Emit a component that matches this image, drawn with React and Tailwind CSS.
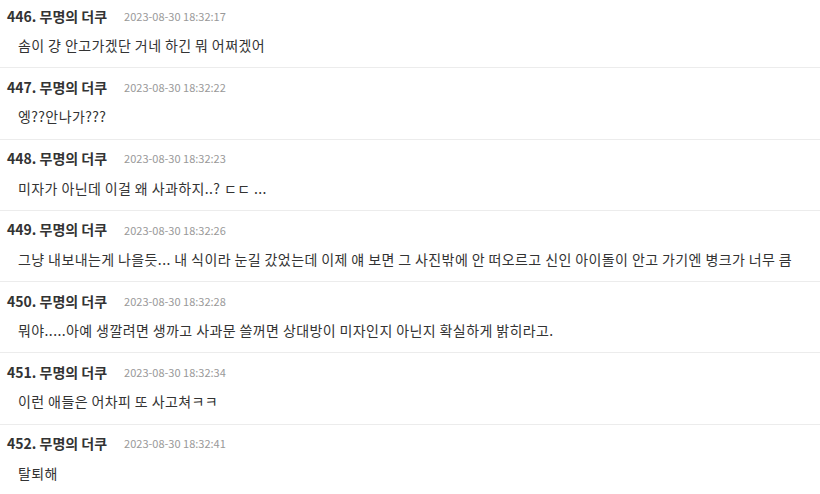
const comments = [
  { no: 446, date: '2023-08-30 18:32:17', text: '솜이 걍 안고가겠단 거네 하긴 뭐 어쩌겠어' },
  { no: 447, date: '2023-08-30 18:32:22', text: '엥??안나가???' },
  { no: 448, date: '2023-08-30 18:32:23', text: '미자가 아닌데 이걸 왜 사과하지..? ㄷㄷ ...' },
  { no: 449, date: '2023-08-30 18:32:26', text: '그냥 내보내는게 나을듯... 내 식이라 눈길 갔었는데 이제 얘 보면 그 사진밖에 안 떠오르고 신인 아이돌이 안고 가기엔 병크가 너무 큼' },
  { no: 450, date: '2023-08-30 18:32:28', text: '뭐야.....아예 생깔려면 생까고 사과문 쓸꺼면 상대방이 미자인지 아닌지 확실하게 밝히라고.' },
  { no: 451, date: '2023-08-30 18:32:34', text: '이런 애들은 어차피 또 사고쳐ㅋㅋ' },
  { no: 452, date: '2023-08-30 18:32:41', text: '탈퇴해' },
];

export default function App() {
  return (
    <div
      className="w-[820px] h-[494px] overflow-hidden bg-white text-[#333]"
      style={{ fontFamily: '"Noto Sans CJK KR", "Noto Sans", sans-serif' }}
    >
      <ul className="-mt-[3px]">
        {comments.map((c) => (
          <li key={c.no} className="border-b border-[#ececec] px-[7px] pt-[10px] pb-[12.25px]">
            <div className="flex items-center h-[18px]">
              <span className="text-[14px] font-bold text-[#333]">{c.no}. 무명의 더쿠</span>
              <span className="ml-[17px] text-[11px] text-[#999]">{c.date}</span>
            </div>
            <p className="mt-[10px] pl-[11px] h-[20px] text-[14px] leading-[20px] tracking-[0.4px] text-[#333] whitespace-nowrap">
              {c.text}
            </p>
          </li>
        ))}
      </ul>
    </div>
  );
}
